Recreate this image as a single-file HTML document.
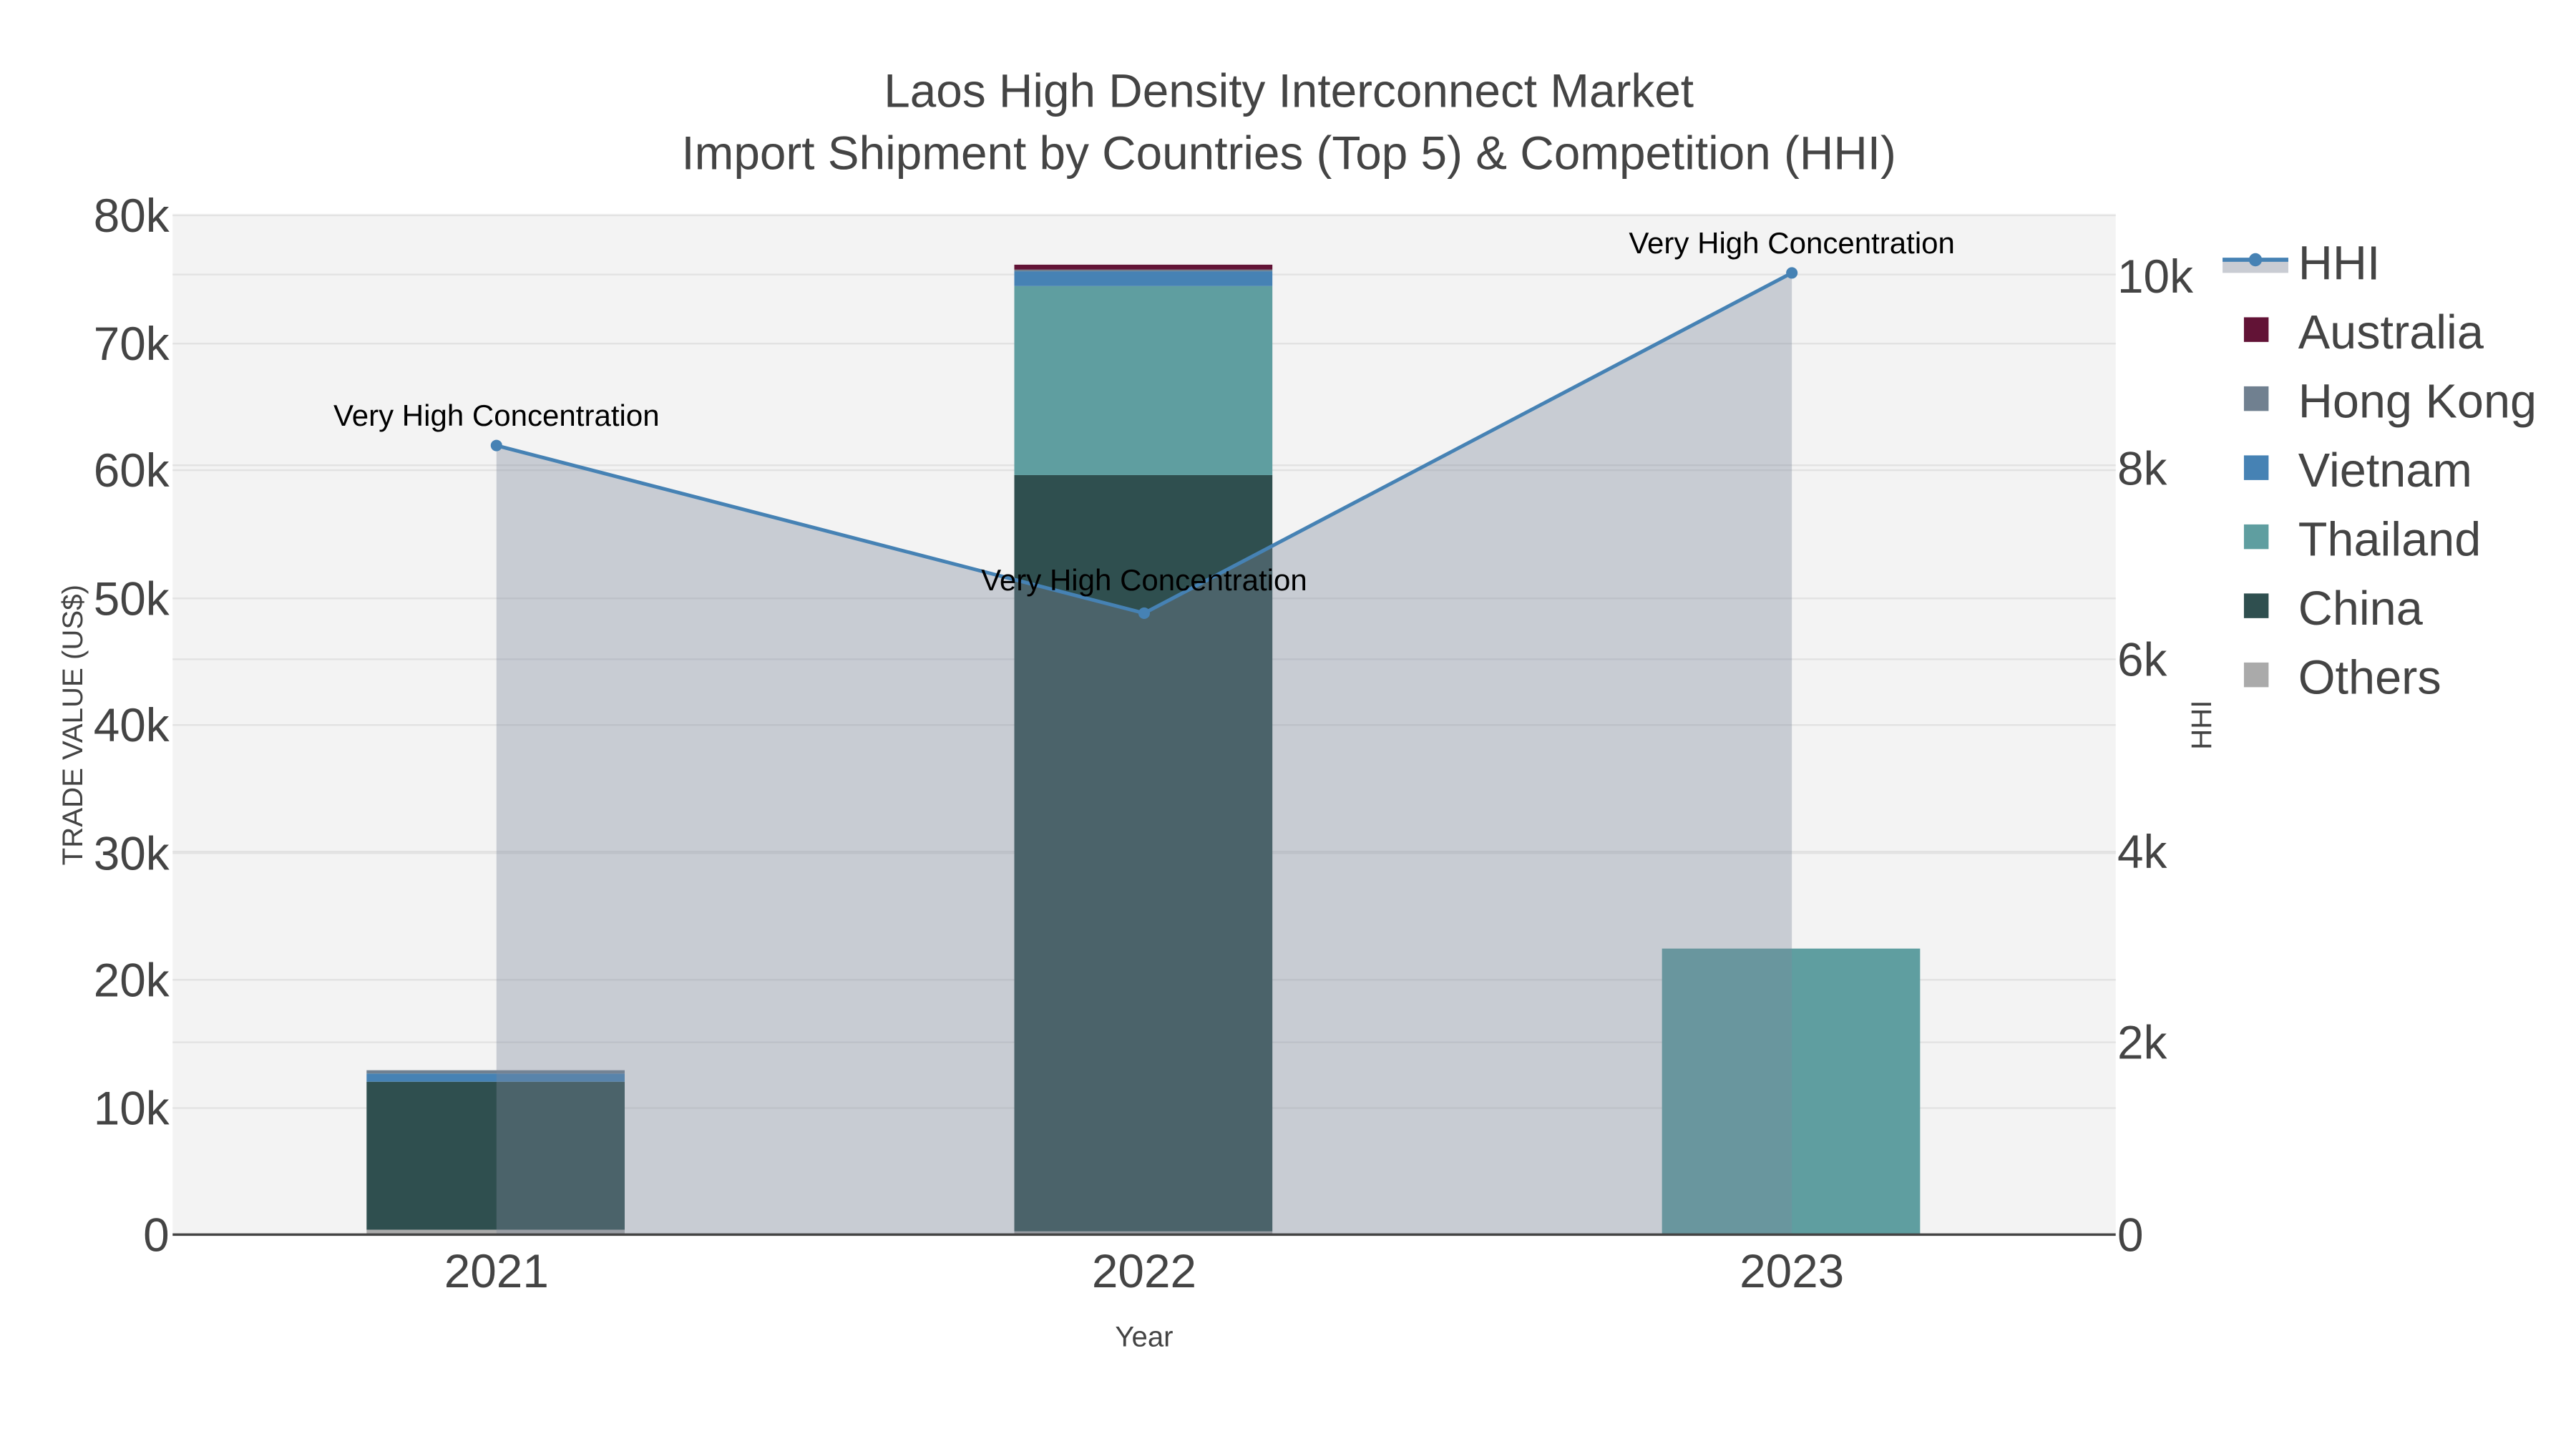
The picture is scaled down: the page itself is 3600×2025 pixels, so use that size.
<!DOCTYPE html>
<html><head><meta charset="utf-8"><style>html,body{margin:0;padding:0;background:#fff}svg{display:block}</style></head>
<body>
<svg width="3600" height="2025" viewBox="0 0 1567 881.4" preserveAspectRatio="none" xmlns="http://www.w3.org/2000/svg" font-family="Liberation Sans, Arial, sans-serif">
<rect width="1567" height="881.4" fill="#fff"/>
<rect x="105" y="130" width="1182" height="621" fill="#f3f3f3"/>
<g stroke="#e2e2e2" stroke-width="1">
<line x1="105" x2="1287" y1="674" y2="674"/><line x1="105" x2="1287" y1="596" y2="596"/>
<line x1="105" x2="1287" y1="519" y2="519"/><line x1="105" x2="1287" y1="441" y2="441"/>
<line x1="105" x2="1287" y1="364" y2="364"/><line x1="105" x2="1287" y1="286" y2="286"/>
<line x1="105" x2="1287" y1="209" y2="209"/><line x1="105" x2="1287" y1="131" y2="131"/>
<line x1="105" x2="1287" y1="634" y2="634"/><line x1="105" x2="1287" y1="518" y2="518"/>
<line x1="105" x2="1287" y1="401" y2="401"/><line x1="105" x2="1287" y1="283" y2="283"/>
<line x1="105" x2="1287" y1="167" y2="167"/>
</g>
<rect x="223" y="748" width="157" height="3" fill="#aaaaaa"/>
<rect x="223" y="658" width="157" height="90" fill="#2f4f4f"/>
<rect x="223" y="653" width="157" height="5" fill="#4682b4"/>
<rect x="223" y="651" width="157" height="2" fill="#708090"/>
<rect x="617" y="749" width="157" height="2" fill="#aaaaaa"/>
<rect x="617" y="289" width="157" height="460" fill="#2f4f4f"/>
<rect x="617" y="174" width="157" height="115" fill="#5f9ea0"/>
<rect x="617" y="165" width="157" height="9" fill="#4682b4"/>
<rect x="617" y="164" width="157" height="1" fill="#708090"/>
<rect x="617" y="161" width="157" height="3" fill="#621336"/>
<rect x="1011" y="577" width="157" height="174" fill="#5f9ea0"/>
<polygon points="302,751 302,271 696,373 1090,166 1090,751" fill="rgb(125,135,155)" fill-opacity="0.36"/>
<polyline points="302,271 696,373 1090,166" fill="none" stroke="#4682b4" stroke-width="2.2"/>
<circle cx="302" cy="271" r="3.5" fill="#4682b4"/><circle cx="696" cy="373" r="3.5" fill="#4682b4"/><circle cx="1090" cy="166" r="3.5" fill="#4682b4"/>
<line x1="105" x2="1287" y1="751" y2="751" stroke="#444" stroke-width="1.5"/>
<g font-size="18.3" fill="#000" text-anchor="middle">
<text x="302" y="259">Very High Concentration</text>
<text x="696" y="359">Very High Concentration</text>
<text x="1090" y="154">Very High Concentration</text>
</g>
<g font-size="28.6" fill="#444" text-anchor="end">
<text x="103" y="761">0</text><text x="103" y="684">10k</text><text x="103" y="606">20k</text>
<text x="103" y="529">30k</text><text x="103" y="451">40k</text><text x="103" y="374">50k</text>
<text x="103" y="296">60k</text><text x="103" y="219">70k</text><text x="103" y="141">80k</text>
</g>
<g font-size="28.6" fill="#444">
<text x="1288" y="761">0</text><text x="1288" y="644">2k</text><text x="1288" y="528">4k</text>
<text x="1288" y="411">6k</text><text x="1288" y="295">8k</text><text x="1288" y="178">10k</text>
</g>
<g font-size="28.6" fill="#444" text-anchor="middle">
<text x="302" y="783">2021</text><text x="696" y="783">2022</text><text x="1090" y="783">2023</text>
<text x="784" y="65">Laos High Density Interconnect Market</text>
<text x="784" y="103">Import Shipment by Countries (Top 5) &amp; Competition (HHI)</text>
</g>
<text x="696" y="819" font-size="17.5" fill="#444" text-anchor="middle">Year</text>
<text transform="translate(50,441) rotate(-90)" font-size="17.5" fill="#444" text-anchor="middle">TRADE VALUE (US$)</text>
<text transform="translate(1345,441) rotate(-90)" font-size="17.5" fill="#444" text-anchor="middle">HHI</text>
<rect x="1352" y="158" width="40" height="8" fill="#c9ccd3"/>
<line x1="1352" x2="1392" y1="158" y2="158" stroke="#4682b4" stroke-width="2.5"/>
<circle cx="1372" cy="158" r="4" fill="#4682b4"/>
<rect x="1365" y="193" width="15" height="15" fill="#621336"/>
<rect x="1365" y="235" width="15" height="15" fill="#708090"/>
<rect x="1365" y="277" width="15" height="15" fill="#4682b4"/>
<rect x="1365" y="319" width="15" height="15" fill="#5f9ea0"/>
<rect x="1365" y="361" width="15" height="15" fill="#2f4f4f"/>
<rect x="1365" y="403" width="15" height="15" fill="#aaaaaa"/>
<g font-size="29" fill="#444">
<text x="1398" y="170">HHI</text><text x="1398" y="212">Australia</text><text x="1398" y="254">Hong Kong</text>
<text x="1398" y="296">Vietnam</text><text x="1398" y="338">Thailand</text><text x="1398" y="380">China</text>
<text x="1398" y="422">Others</text>
</g>
</svg>
</body></html>
